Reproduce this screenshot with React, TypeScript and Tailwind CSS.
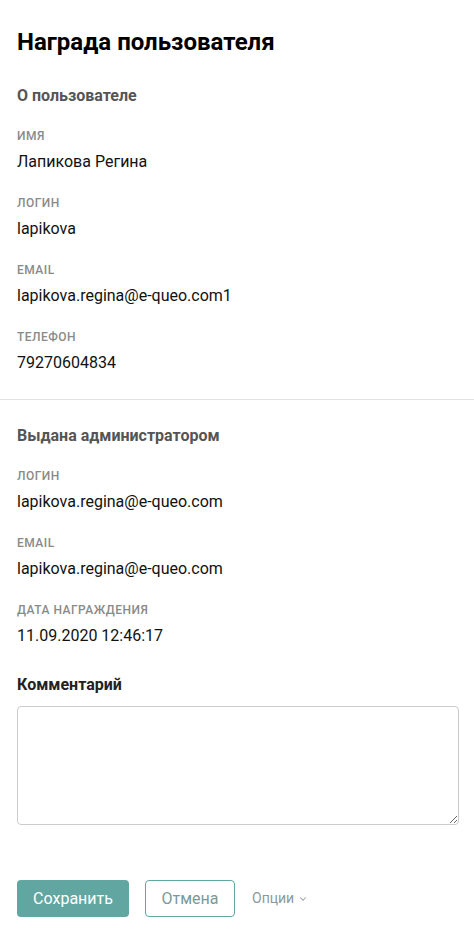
import { ChevronDown } from "lucide-react";

const USER_FIELDS = [
  { label: "Имя", value: "Лапикова Регина" },
  { label: "Логин", value: "lapikova" },
  { label: "Email", value: "lapikova.regina@e-queo.com1" },
  { label: "Телефон", value: "79270604834" },
];

const ADMIN_FIELDS = [
  { label: "Логин", value: "lapikova.regina@e-queo.com" },
  { label: "Email", value: "lapikova.regina@e-queo.com" },
  { label: "Дата награждения", value: "11.09.2020 12:46:17" },
];

function Field({ label, value }: { label: string; value: string }) {
  return (
    <div className="flex flex-col gap-[8px]">
      <div className="pt-[1px] text-[12px] leading-[16px] font-medium uppercase tracking-[0.04em] text-[#8a8a8a]">
        {label}
      </div>
      <div className="text-[16px] leading-[20px] text-[#111]">{value}</div>
    </div>
  );
}

function Section({ title, fields }: { title: string; fields: { label: string; value: string }[] }) {
  return (
    <div className="flex flex-col">
      <h2 className="text-[16px] leading-[20px] font-bold text-[#555]">{title}</h2>
      <div className="mt-[21px] flex flex-col gap-[22px]">
        {fields.map((f) => (
          <Field key={f.label} label={f.label} value={f.value} />
        ))}
      </div>
    </div>
  );
}

export default function App() {
  return (
    <div className="min-h-screen bg-white font-['Roboto',sans-serif] pb-[18px]">
      <div className="px-[17px] pt-[28px]">
        <h1 className="text-[24px] leading-[28px] font-bold text-black">Награда пользователя</h1>
        <div className="mt-[30px]">
          <Section title="О пользователе" fields={USER_FIELDS} />
        </div>
      </div>

      <div className="mt-[26px] border-t border-[#e2e2e2]" />

      <div className="px-[17px] pt-[26px]">
        <Section title="Выдана администратором" fields={ADMIN_FIELDS} />

        <h2 className="mt-[29px] text-[16px] leading-[20px] font-bold text-[#222]">Комментарий</h2>
        <textarea className="mt-[11px] block w-[442px] h-[119px] rounded-[4px] border border-[#cccccc] px-3 py-2 text-[16px] outline-none" />

        <div className="mt-[55px] flex items-center">
          <button className="h-[37px] w-[112px] rounded-[4px] bg-[#62a6a1] text-[16px] text-white">
            Сохранить
          </button>
          <button className="ml-[16px] h-[37px] w-[90px] rounded-[4px] border border-[#62a6a1] text-[16px] text-[#7a9a98]">
            Отмена
          </button>
          <button className="ml-[17px] flex items-center gap-[4px] text-[14px] text-[#8a9a9a]">
            Опции
            <ChevronDown size={10} strokeWidth={2.5} className="text-[#999]" />
          </button>
        </div>
      </div>
    </div>
  );
}
